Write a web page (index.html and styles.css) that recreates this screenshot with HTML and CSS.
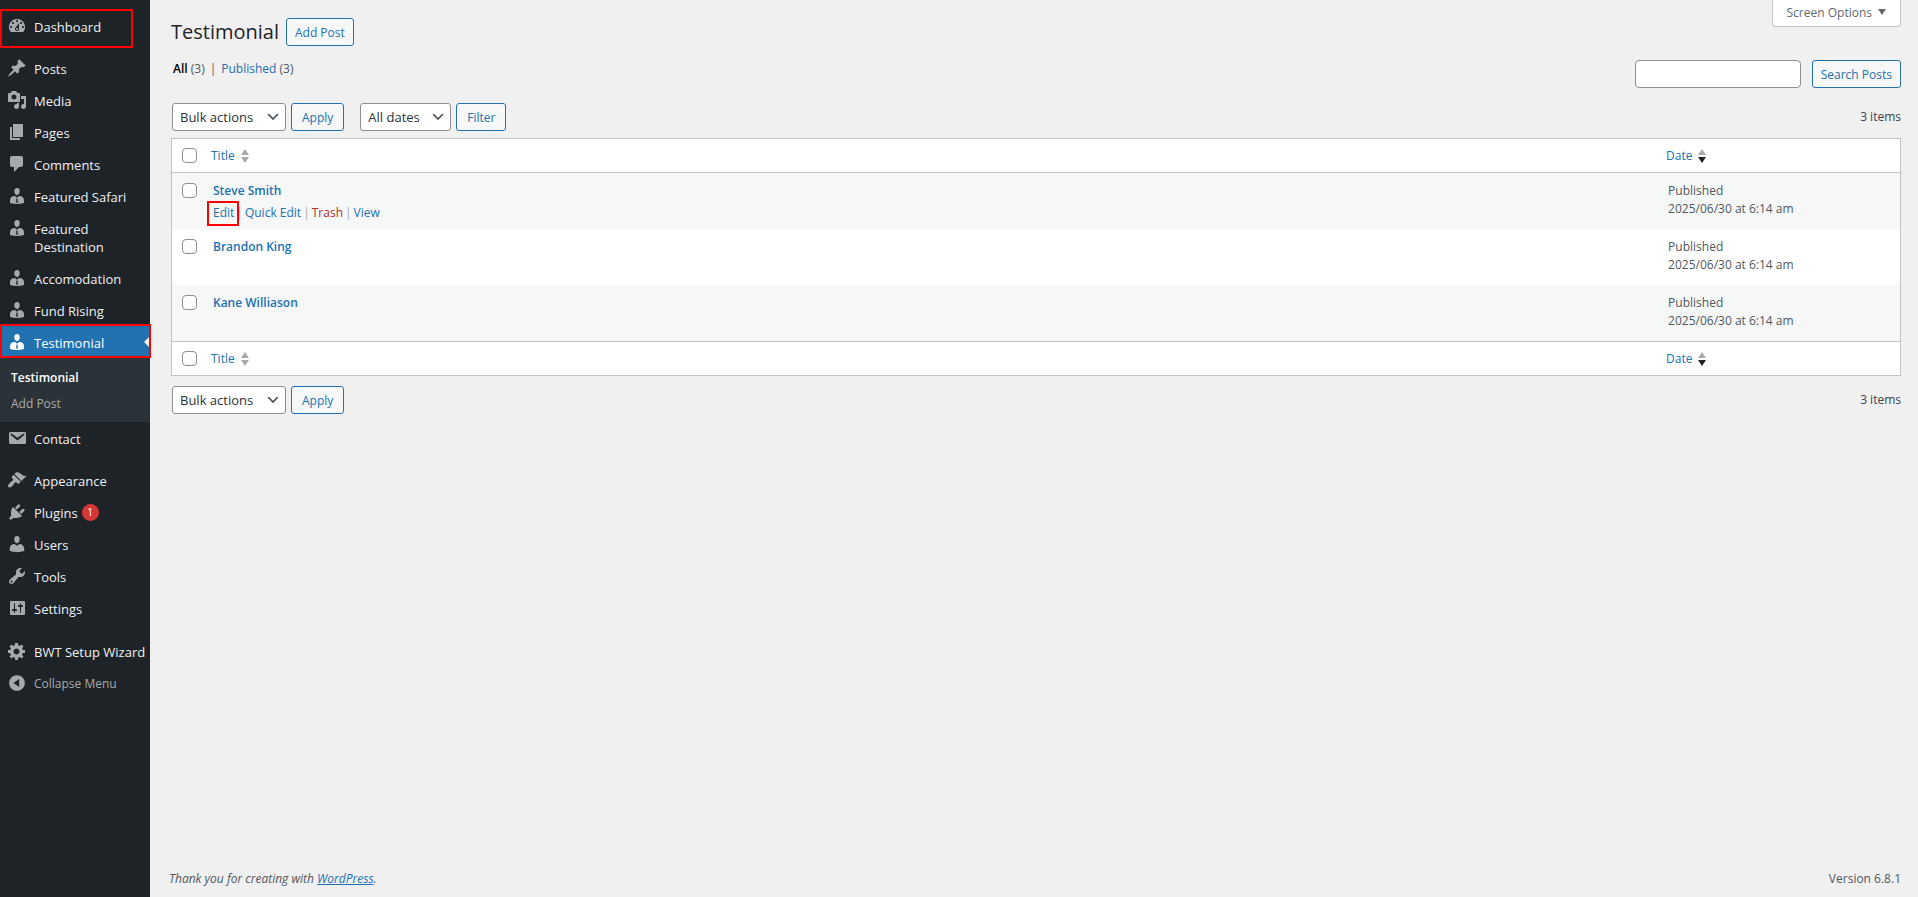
FILE: index.html
```html
<!DOCTYPE html>
<html lang="en">
<head>
<meta charset="utf-8">
<title>Testimonial</title>
<link rel="stylesheet" href="styles.css">
</head>
<body>
<svg class="sprite" aria-hidden="true">
  <symbol id="i-dashboard" viewBox="0 0 20 20"><path fill-rule="evenodd" d="M3.76 16h12.48A7.998 7.998 0 0 0 10 3a7.998 7.998 0 0 0-6.24 13zM10 4c.55 0 1 .45 1 1s-.45 1-1 1-1-.45-1-1 .45-1 1-1zM6 6c.55 0 1 .45 1 1s-.45 1-1 1-1-.45-1-1 .45-1 1-1zm8 0c.55 0 1 .45 1 1s-.45 1-1 1-1-.45-1-1 .45-1 1-1zm-5.37 5.55L12 7v6c0 1.1-.9 2-2 2s-2-.9-2-2c0-.57.24-1.08.63-1.45zM4 10c.55 0 1 .45 1 1s-.45 1-1 1-1-.45-1-1 .45-1 1-1zm12 0c.55 0 1 .45 1 1s-.45 1-1 1-1-.45-1-1 .45-1 1-1zm-5 3c0-.55-.45-1-1-1s-1 .45-1 1 .45 1 1 1 1-.45 1-1z"/></symbol>
  <symbol id="i-post" viewBox="0 0 20 20"><path d="M10.44 3.02l1.82-1.82 6.36 6.35-1.83 1.82c-1.05-.68-2.48-.57-3.41.36l-.75.75c-.92.93-1.04 2.35-.35 3.41l-1.83 1.82-2.41-2.41-2.8 2.79c-.42.42-3.38 2.71-3.8 2.29s1.86-3.39 2.28-3.81l2.79-2.79L4.1 9.36l1.83-1.82c1.05.69 2.48.57 3.4-.36l.75-.75c.93-.92 1.05-2.35.36-3.41z"/></symbol>
  <symbol id="i-media" viewBox="0 0 20 20"><path fill-rule="evenodd" d="M13 11V4c0-.55-.45-1-1-1h-1.67L9 1H5L3.67 3H2c-.55 0-1 .45-1 1v7c0 .55.45 1 1 1h10c.55 0 1-.45 1-1zM7 4.5c1.38 0 2.5 1.12 2.5 2.5S8.38 9.5 7 9.5 4.5 8.38 4.5 7 5.62 4.5 7 4.5zM14 6h5v10.5c0 1.38-1.12 2.5-2.5 2.5S14 17.88 14 16.5s1.12-2.5 2.5-2.5c.17 0 .34.02.5.05V9h-3V6zm-4 8.05V13h2v3.5c0 1.38-1.12 2.5-2.5 2.5S7 17.88 7 16.5 8.12 14 9.5 14c.17 0 .34.02.5.05z"/></symbol>
  <symbol id="i-page" viewBox="0 0 20 20"><path d="M6 15V2h10v13H6zm-1 1h8v2H3V5h2v11z"/></symbol>
  <symbol id="i-comments" viewBox="0 0 20 20"><path d="M5 2h9c1.1 0 2 .9 2 2v7c0 1.1-.9 2-2 2h-2l-5 5v-5H5c-1.1 0-2-.9-2-2V4c0-1.1.9-2 2-2z"/></symbol>
  <symbol id="i-person" viewBox="0 0 20 20"><path d="M10 2c1.9 0 2.9 1.6 2.7 3.6C12.500 7.600 11.500 9 10 9S7.500 7.600 7.300 5.600C7.100 3.600 8.100 2 10 2z"/><path fill-rule="evenodd" d="M8 10l2 1.700L12 10c3 0 5 1.500 5 4.300v2.600c-4.400 1.400-9.600 1.400-14 0v-2.600C3 11.500 5 10 8 10zM9.500 12.400l-.7 3.600 1 1.300-.1-2.300.3-1.400.3 1.400-.1 2.300 1-1.300-.7-3.600z"/></symbol>
  <symbol id="i-email" viewBox="0 0 20 20"><path d="M3.87 4h13.25C18.37 4 19 4.59 19 5.79v8.42c0 1.19-.63 1.79-1.88 1.79H3.87c-1.25 0-1.88-.6-1.88-1.79V5.79c0-1.2.63-1.79 1.88-1.79zm6.62 8.6l6.74-5.53c.24-.2.43-.66.13-1.07-.29-.41-.82-.42-1.17-.17l-5.7 3.86L4.8 5.83c-.35-.25-.88-.24-1.17.17-.3.41-.11.87.13 1.07z"/></symbol>
  <symbol id="i-appearance" viewBox="0 0 20 20"><path d="M14.48 11.06L7.41 3.99l1.5-1.5c.5-.56 2.3-.47 3.51.32 1.21.8 1.43 1.28 2.91 2.1 1.18.64 2.45 1.26 4.45.85zm-.71.71L6.7 4.7 4.93 6.47c-.39.39-.39 1.02 0 1.41l1.06 1.06c.39.39.39 1.03 0 1.42-.6.6-1.43 1.11-2.21 1.69-.35.26-.7.53-1.01.84C1.43 14.23.4 16.08 1.4 17.07c.99 1 2.84-.03 4.18-1.36.31-.31.58-.66.85-1.02.57-.78 1.08-1.61 1.69-2.21.39-.39 1.02-.39 1.41 0l1.06 1.06c.39.39 1.02.39 1.41 0z"/></symbol>
  <symbol id="i-plugins" viewBox="0 0 20 20"><path d="M13.11 4.36L9.87 7.6 8 5.73l3.24-3.24c.35-.34 1.05-.2 1.56.32.52.51.66 1.21.31 1.55zm-8 1.77l.91-1.12 9.01 9.01-1.19.84c-.71.71-2.63 1.16-3.82 1.16H6.14L4.9 17.26c-.59.59-1.54.59-2.12 0-.59-.58-.59-1.53 0-2.12l1.24-1.24v-3.88c0-1.13.4-3.19 1.09-3.89zm7.26 3.97l3.24-3.24c.34-.35 1.04-.21 1.55.31.52.51.66 1.21.31 1.55l-3.24 3.25z"/></symbol>
  <symbol id="i-users" viewBox="0 0 20 20"><path d="M10 9.25c-2.27 0-2.73-3.44-2.73-3.44C7 4.02 7.82 2 9.97 2c2.16 0 2.98 2.02 2.71 3.81 0 0-.41 3.44-2.68 3.44zm0 2.57L12.72 10c2.39 0 4.52 2.33 4.52 4.53v2.49s-3.65 1.13-7.24 1.13c-3.65 0-7.24-1.13-7.24-1.13v-2.49c0-2.25 1.94-4.48 4.47-4.48z"/></symbol>
  <symbol id="i-tools" viewBox="0 0 20 20"><path fill-rule="evenodd" d="M16.68 9.77c-1.34 1.34-3.3 1.67-4.95.99l-5.41 6.52c-.99.99-2.59.99-3.58 0s-.99-2.59 0-3.57l6.52-5.42c-.68-1.65-.35-3.61.99-4.95 1.28-1.28 3.12-1.62 4.72-1.06l-2.89 2.89 2.82 2.82 2.86-2.87c.53 1.58.18 3.39-1.08 4.65zM3.81 16.21c.4.39 1.04.39 1.43 0 .4-.4.4-1.04 0-1.43-.39-.4-1.03-.4-1.43 0-.39.39-.39 1.03 0 1.43z"/></symbol>
  <symbol id="i-settings" viewBox="0 0 20 20"><path fill-rule="evenodd" d="M18 16V4c0-.55-.45-1-1-1H4c-.55 0-1 .45-1 1v12c0 .55.45 1 1 1h13c.55 0 1-.45 1-1zM8 11h1c.55 0 1 .45 1 1s-.45 1-1 1H8v1.500c0 .28-.22.5-.5.5s-.5-.22-.5-.5V13H6c-.55 0-1-.45-1-1s.45-1 1-1h1V5.500c0-.28.22-.5.5-.5s.5.22.5.5V11zm5-2h-1c-.55 0-1-.45-1-1s.45-1 1-1h1V5.500c0-.28.22-.5.5-.5s.5.22.5.5V7h1c.55 0 1 .45 1 1s-.45 1-1 1h-1v5.500c0 .28-.22.5-.5.5s-.5-.22-.5-.5V9z"/></symbol>
  <symbol id="i-gear" viewBox="0 0 20 20"><path fill-rule="evenodd" d="M18 12h-2.180c-.17.7-.44 1.350-.81 1.930l1.540 1.540-2.100 2.100-1.540-1.540c-.58.36-1.230.63-1.910.79V19H8v-2.180c-.68-.16-1.330-.43-1.910-.79l-1.540 1.540-2.120-2.120 1.540-1.540c-.36-.58-.63-1.230-.79-1.910H1V9.030h2.170c.16-.7.44-1.350.8-1.940L2.430 5.550l2.100-2.100 1.540 1.540c.58-.37 1.240-.64 1.930-.81V2h3v2.180c.68.16 1.330.43 1.910.79l1.540-1.540 2.120 2.120-1.540 1.540c.36.59.64 1.240.8 1.940H18V12zm-8.500 1.500c1.660 0 3-1.340 3-3s-1.340-3-3-3-3 1.340-3 3 1.340 3 3 3z"/></symbol>
  <symbol id="i-collapse" viewBox="0 0 20 20"><path fill-rule="evenodd" d="M10 2.160c4.330 0 7.840 3.510 7.840 7.840S14.330 17.840 10 17.840 2.160 14.330 2.160 10 5.670 2.160 10 2.160zM12.200 6L6.500 10l5.700 4z"/></symbol>
  <symbol id="i-chevron" viewBox="0 0 20 20"><path d="M5 6l5 5 5-5 2 1-7 7-7-7 2-1z"/></symbol>
  <symbol id="i-up" viewBox="0 0 8 6"><path d="M4 0l4 6H0z"/></symbol>
  <symbol id="i-down" viewBox="0 0 8 6"><path d="M0 0h8L4 6z"/></symbol>
</svg>

<div class="layout">
  <nav class="sidebar" aria-label="Main menu">
    <ul class="menu">
      <li class="marked-wide"><a class="item" href="#"><svg class="icon"><use href="#i-dashboard"/></svg><span>Dashboard</span></a></li>
      <li class="separator"></li>
      <li><a class="item" href="#"><svg class="icon"><use href="#i-post"/></svg><span>Posts</span></a></li>
      <li><a class="item" href="#"><svg class="icon"><use href="#i-media"/></svg><span>Media</span></a></li>
      <li><a class="item" href="#"><svg class="icon"><use href="#i-page"/></svg><span>Pages</span></a></li>
      <li><a class="item" href="#"><svg class="icon"><use href="#i-comments"/></svg><span>Comments</span></a></li>
      <li><a class="item" href="#"><svg class="icon"><use href="#i-person"/></svg><span>Featured Safari</span></a></li>
      <li><a class="item" href="#"><svg class="icon"><use href="#i-person"/></svg><span>Featured Destination</span></a></li>
      <li><a class="item" href="#"><svg class="icon"><use href="#i-person"/></svg><span>Accomodation</span></a></li>
      <li><a class="item" href="#"><svg class="icon"><use href="#i-person"/></svg><span>Fund Rising</span></a></li>
      <li>
        <a class="item current" href="#" aria-current="page"><svg class="icon"><use href="#i-person"/></svg><span>Testimonial</span></a>
        <ul class="submenu">
          <li><a class="subitem active" href="#">Testimonial</a></li>
          <li><a class="subitem" href="#">Add Post</a></li>
        </ul>
      </li>
      <li><a class="item" href="#"><svg class="icon"><use href="#i-email"/></svg><span>Contact</span></a></li>
      <li class="separator"></li>
      <li><a class="item" href="#"><svg class="icon"><use href="#i-appearance"/></svg><span>Appearance</span></a></li>
      <li><a class="item" href="#"><svg class="icon"><use href="#i-plugins"/></svg><span>Plugins</span><span class="count">1</span></a></li>
      <li><a class="item" href="#"><svg class="icon"><use href="#i-users"/></svg><span>Users</span></a></li>
      <li><a class="item" href="#"><svg class="icon"><use href="#i-tools"/></svg><span>Tools</span></a></li>
      <li><a class="item" href="#"><svg class="icon"><use href="#i-settings"/></svg><span>Settings</span></a></li>
      <li class="separator last"></li>
      <li><a class="item" href="#"><svg class="icon"><use href="#i-gear"/></svg><span>BWT Setup Wizard</span></a></li>
      <li><button class="item collapse" type="button"><svg class="icon"><use href="#i-collapse"/></svg><span>Collapse Menu</span></button></li>
    </ul>
  </nav>

  <main class="content">
    <header class="topbar">
      <div class="heading">
        <h1>Testimonial</h1>
        <a class="button compact" href="#">Add Post</a>
      </div>
      <button class="screen-options" type="button">Screen Options <svg class="tri"><use href="#i-down"/></svg></button>
    </header>

    <div class="subbar">
      <ul class="views">
        <li><a class="all" href="#">All</a> (3)</li>
        <li class="bar">|</li>
        <li><a href="#">Published</a> (3)</li>
      </ul>
      <form class="search">
        <input type="search" aria-label="Search Posts">
        <button class="button compact" type="button">Search Posts</button>
      </form>
    </div>

    <div class="tablenav">
      <div class="select bulk"><select aria-label="Select bulk action"><option>Bulk actions</option></select><svg class="chevron"><use href="#i-chevron"/></svg></div>
      <button class="button" type="button">Apply</button>
      <div class="select dates"><select aria-label="Filter by date"><option>All dates</option></select><svg class="chevron"><use href="#i-chevron"/></svg></div>
      <button class="button" type="button">Filter</button>
      <span class="total">3 items</span>
    </div>

    <table class="posts">
      <thead>
        <tr>
          <td class="check"><input type="checkbox" aria-label="Select all"></td>
          <th scope="col"><a class="sort" href="#">Title <span class="arrows"><svg><use href="#i-up"/></svg><svg><use href="#i-down"/></svg></span></a></th>
          <th scope="col" class="date"><a class="sort" href="#">Date <span class="arrows desc"><svg><use href="#i-up"/></svg><svg><use href="#i-down"/></svg></span></a></th>
        </tr>
      </thead>
      <tbody>
        <tr>
          <td class="check"><input type="checkbox" aria-label="Select Steve Smith"></td>
          <td><a class="title" href="#">Steve Smith</a>
            <div class="actions"><a class="edit" href="#">Edit</a><i>|</i><a href="#">Quick Edit</a><i>|</i><a class="trash" href="#">Trash</a><i>|</i><a href="#">View</a></div></td>
          <td>Published<br>2025/06/30 at 6:14 am</td>
        </tr>
        <tr>
          <td class="check"><input type="checkbox" aria-label="Select Brandon King"></td>
          <td><a class="title" href="#">Brandon King</a></td>
          <td>Published<br>2025/06/30 at 6:14 am</td>
        </tr>
        <tr>
          <td class="check"><input type="checkbox" aria-label="Select Kane Williason"></td>
          <td><a class="title" href="#">Kane Williason</a></td>
          <td>Published<br>2025/06/30 at 6:14 am</td>
        </tr>
      </tbody>
      <tfoot>
        <tr>
          <td class="check"><input type="checkbox" aria-label="Select all"></td>
          <th scope="col"><a class="sort" href="#">Title <span class="arrows"><svg><use href="#i-up"/></svg><svg><use href="#i-down"/></svg></span></a></th>
          <th scope="col"><a class="sort" href="#">Date <span class="arrows desc"><svg><use href="#i-up"/></svg><svg><use href="#i-down"/></svg></span></a></th>
        </tr>
      </tfoot>
    </table>

    <div class="tablenav bottom">
      <div class="select bulk"><select aria-label="Select bulk action"><option>Bulk actions</option></select><svg class="chevron"><use href="#i-chevron"/></svg></div>
      <button class="button" type="button">Apply</button>
      <span class="total">3 items</span>
    </div>

    <footer class="footer">
      <em>Thank you for creating with <a href="#">WordPress</a>.</em>
      <span>Version 6.8.1</span>
    </footer>
  </main>
</div>
</body>
</html>
```
FILE: styles.css
```css
* { box-sizing: border-box; }

body {
  margin: 0;
  background: #f0f0f0;
  color: #3c434a;
  font: 12px/18px "Open Sans", "Noto Sans", sans-serif;
}

ul { list-style: none; margin: 0; padding: 0; }
a { color: #2271b1; text-decoration: none; }
button, input, select { font: inherit; margin: 0; }
svg { display: block; fill: currentColor; }
.sprite { position: absolute; width: 0; height: 0; }

.layout { display: flex; min-height: 100vh; }

/* Sidebar */
.sidebar { flex: none; width: 150px; background: #1d2327; padding-top: 10px; }
.item {
  position: relative;
  display: flex;
  align-items: flex-start;
  width: 100%;
  min-height: 32px;
  padding: 8px 0 6px 7px;
  border: 0;
  background: none;
  color: #f0f0f1;
  font-size: 13px;
  line-height: 18px;
  text-align: left;
}
.icon { flex: none; width: 20px; height: 20px; margin: -2px 7px 0 0; color: #a7aaad; }
.separator { height: 10px; }
.separator.last { height: 11px; }
.count {
  width: 17px;
  height: 17px;
  margin-left: 4px;
  border-radius: 50%;
  background: #d63638;
  color: #fff;
  font-size: 10px;
  line-height: 17px;
  text-align: center;
}
.collapse { color: #a7aaad; font-size: 12px; }
.current { background: #2271b1; color: #fff; }
.current .icon { color: #fff; }
.current::before {
  content: "";
  position: absolute;
  right: 0;
  top: 10px;
  border: 6px solid transparent;
  border-right-color: #f0f0f1;
  border-left: 0;
}
.submenu { background: #2c3338; padding: 7px 0 5px; }
.subitem { display: block; padding: 4px 11px; color: #a7aaad; font-size: 12px; }
.active { color: #fff; font-weight: 600; }

/* Red highlight frames */
.marked-wide, .edit { position: relative; }
.marked-wide::after, .current::after, .edit::after {
  content: "";
  position: absolute;
  border: 2px solid #f00;
  pointer-events: none;
}
.marked-wide::after { inset: -1px 17px -6px 0; }
.current::after { inset: -2px -1px 0 0; }
.edit::after { inset: -3px -5px -4px -6px; }

/* Content */
.content { flex: 1; display: flex; flex-direction: column; padding: 0 17px 9px 21px; }
.topbar, .subbar, .footer { display: flex; justify-content: space-between; align-items: flex-start; }
.heading { display: flex; align-items: center; gap: 7px; padding-top: 18px; }
h1 { margin: 0; color: #1d2327; font-size: 20px; line-height: 28px; font-weight: 400; }
.button {
  height: 28px;
  padding: 0 10px;
  border: 1px solid #2271b1;
  border-radius: 3px;
  background: #f6f7f7;
  color: #2271b1;
  font-size: 12px;
  line-height: 27px;
}
.compact { padding: 0 8px; }
.screen-options {
  display: flex;
  align-items: center;
  gap: 6px;
  height: 27px;
  padding: 0 14px;
  border: 1px solid #c3c4c7;
  border-top: 0;
  border-radius: 0 0 4px 4px;
  background: #fff;
  color: #646970;
}
.tri { width: 8px; height: 6px; margin-top: -3px; }

.subbar { margin-top: 14px; }
.views { display: flex; gap: 5px; padding-left: 2px; color: #50575e; }
.all { color: #000; font-weight: 600; }
.search { display: flex; gap: 11px; }
.search input {
  width: 166px;
  height: 28px;
  padding: 0 8px;
  border: 1px solid #8c8f94;
  border-radius: 4px;
  background: #fff;
}

.tablenav { display: flex; align-items: center; gap: 5px; margin: 15px 0 7px; padding-left: 1px; }
.tablenav.bottom { margin: 10px 0 0; }
.select { position: relative; }
.select select {
  width: 100%;
  height: 28px;
  padding: 0 24px 0 7px;
  border: 1px solid #8c8f94;
  border-radius: 3px;
  background: #fff;
  color: #2c3338;
  font-size: 13px;
  appearance: none;
}
.bulk { width: 114px; }
.dates { width: 91px; margin-left: 11px; }
.chevron { position: absolute; right: 5px; top: 6px; width: 16px; height: 16px; color: #50575e; pointer-events: none; }
.total { margin-left: auto; }

.posts {
  width: 100%;
  border: 1px solid #c3c4c7;
  border-spacing: 0;
  table-layout: fixed;
  background: #fff;
  color: #50575e;
}
.posts td, .posts th { padding: 9px 10px 6px; vertical-align: top; text-align: left; font-weight: 400; }
.posts tbody td { height: 56px; }
.posts tbody tr:nth-child(odd) { background: #f6f7f7; }
.posts thead td, .posts thead th { border-bottom: 1px solid #c3c4c7; }
.posts tfoot td, .posts tfoot th { border-top: 1px solid #c3c4c7; }
.posts thead td, .posts thead th, .posts tfoot td, .posts tfoot th { height: 34px; padding: 7px 8px; vertical-align: middle; }
.posts .check { width: 31px; padding: 10px 0 0 10px; }
.posts thead .check, .posts tfoot .check { padding: 0 0 0 10px; }
.date { width: 14%; }
.check input {
  display: block;
  width: 15px;
  height: 15px;
  border: 1px solid #8c8f94;
  border-radius: 4px;
  background: #fff;
  appearance: none;
}
.sort { display: flex; align-items: center; gap: 6px; }
.arrows { display: flex; flex-direction: column; gap: 2px; color: #a7aaad; }
.arrows svg { width: 8px; height: 6px; }
.desc svg + svg { color: #1d2327; }
.title { display: block; font-weight: 600; }
.actions { display: flex; gap: 2px; margin-top: 4px; }
.actions i { font-style: normal; color: #a7aaad; }
.trash { color: #b32d2e; }

.footer { margin-top: auto; margin-left: -2px; color: #50575e; }
.footer a { text-decoration: underline; }
```
